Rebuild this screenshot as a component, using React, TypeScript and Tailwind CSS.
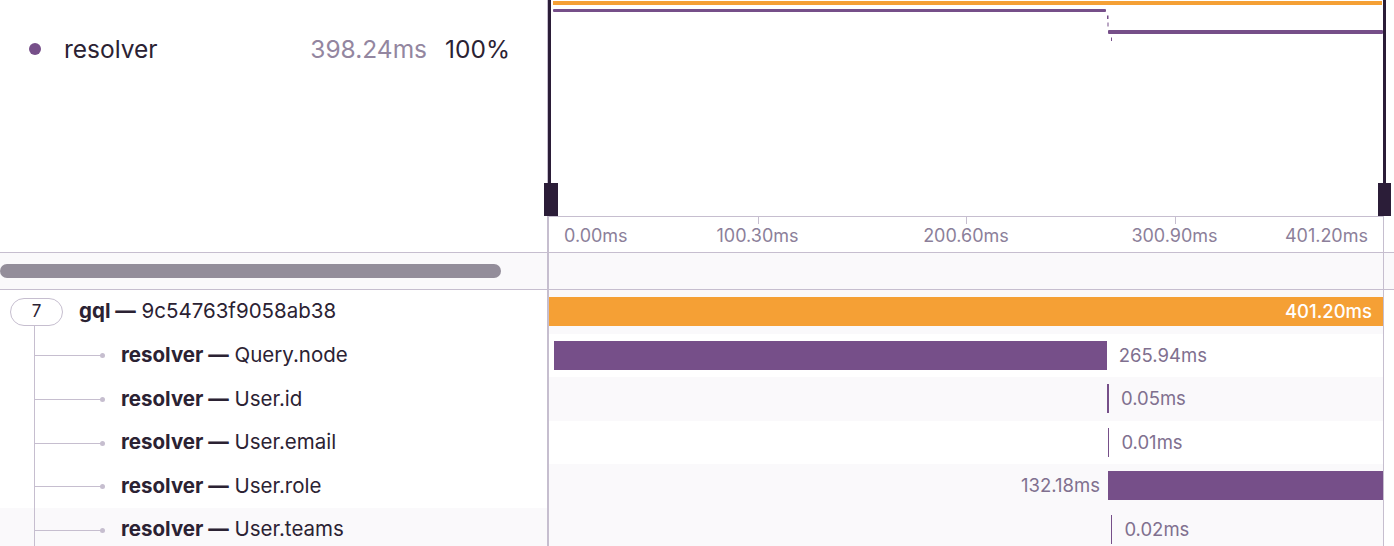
import React from "react";

type Span = {
  op: string;
  desc: string;
  start: number; // ms
  dur: number; // ms
  minW?: number;
  root?: boolean;
};

const TOTAL = 401.2;
const TRACK = 834; // px width of the timeline track
const PX = TRACK / TOTAL;

const spans: Span[] = [
  { op: "gql", desc: "9c54763f9058ab38", start: 0, dur: 401.2, root: true },
  { op: "resolver", desc: "Query.node", start: 2.41, dur: 265.94 },
  { op: "resolver", desc: "User.id", start: 268.4, dur: 0.05, minW: 2 },
  { op: "resolver", desc: "User.email", start: 269.1, dur: 0.01, minW: 1 },
  { op: "resolver", desc: "User.role", start: 268.9, dur: 132.18 },
  { op: "resolver", desc: "User.teams", start: 270.3, dur: 0.02, minW: 1.5 },
];

const fmt = (ms: number) => `${ms.toFixed(2)}ms`;

function Minimap() {
  return (
    <svg className="absolute left-0 top-0" width="845" height="216" viewBox="0 0 845 216">
      <rect x="4" y="1" width="829" height="4" fill="#f5a035" />
      <rect x="4" y="9" width="553" height="3" rx="1" fill="#764f89" />
      <rect x="558" y="15.5" width="1.5" height="3.5" fill="#764f89" />
      <rect x="558.5" y="22.5" width="1" height="4" fill="#764f89" />
      <rect x="559" y="30" width="275" height="4" rx="1" fill="#764f89" />
      <rect x="562" y="37.5" width="1" height="3.5" fill="#764f89" />
    </svg>
  );
}

// axis labels sit on the tick positions, first/last pinned to the edges
function Axis() {
  const ticks = [1, 2, 3];
  return (
    <div className="relative h-[36px] border-t border-r border-[#c6becf] text-[18px] text-[#8c7f9a]">
      {ticks.map((t) => (
        <React.Fragment key={t}>
          <div className="absolute top-0 h-[7px] w-px bg-[#c6becf]" style={{ left: (TRACK / 4) * t }} />
          <span
            className="absolute top-0 flex h-full -translate-x-1/2 items-center pt-[1px]"
            style={{ left: (TRACK / 4) * t }}
          >
            {fmt((TOTAL / 4) * t)}
          </span>
        </React.Fragment>
      ))}
      <div className="flex h-full items-center justify-between px-[15px] pt-[1px]">
        <span>0.00ms</span>
        <span>{fmt(TOTAL)}</span>
      </div>
    </div>
  );
}

function TimelineCell({ s }: { s: Span }) {
  const left = s.start * PX;
  const width = Math.max(s.dur * PX, s.minW ?? 1);
  const atEnd = left + width > TRACK - 60;
  if (s.root) {
    return (
      <div className="absolute left-0 right-0 top-[7px] flex h-[29px] items-center justify-end bg-[#f5a035] pr-[11px] text-[18.5px] font-medium text-white">
        {fmt(s.dur)}
      </div>
    );
  }
  return (
    <>
      <div className="absolute top-[7px] h-[29px] bg-[#764f89]" style={{ left, width }} />
      {atEnd ? (
        <span
          className="absolute top-0 flex h-full items-center text-[18.5px] text-[#80708f]"
          style={{ right: TRACK - left + 8 }}
        >
          {fmt(s.dur)}
        </span>
      ) : (
        <span
          className="absolute top-0 flex h-full items-center text-[18.5px] text-[#80708f]"
          style={{ left: left + width + 12 }}
        >
          {fmt(s.dur)}
        </span>
      )}
    </>
  );
}

export default function App() {
  return (
    <div className="relative h-[546px] w-[1394px] overflow-hidden bg-white font-['Inter','Noto_Sans',sans-serif] text-[#2b2233]">
      {/* header: legend + minimap + axis */}
      <div className="flex h-[253px] border-b border-[#c6becf]">
        <div className="w-[547px] shrink-0 pl-[29px] pr-[37px] pt-[35px]">
          <div className="flex h-[28px] items-center">
            <span className="h-[12px] w-[12px] rounded-full bg-[#764f89]" />
            <span className="ml-[23px] text-[24.5px]">resolver</span>
            <span className="ml-auto text-[24.5px] text-[#9386a0]">398.24ms</span>
            <span className="ml-[18px] text-[24.5px]">100%</span>
          </div>
        </div>
        <div className="relative flex w-[837px] flex-col border-l-2 border-[#c6becf]">
          <div className="relative h-[216px]">
            <Minimap />
            <div className="absolute left-[-1px] top-0 h-[183px] w-[3px] bg-[#2b1d38]" />
            <div className="absolute left-[-5px] top-[183px] h-[33px] w-[14px] bg-[#2b1d38]" />
            <div className="absolute left-[834px] top-0 h-[183px] w-[3px] bg-[#2b1d38]" />
            <div className="absolute left-[829px] top-[183px] h-[33px] w-[13px] bg-[#2b1d38]" />
          </div>
          <Axis />
        </div>
      </div>

      {/* scrollbar row */}
      <div className="flex h-[37px] border-b border-[#c6becf] bg-[#faf9fb]">
        <div className="flex w-[547px] shrink-0 items-center">
          <div className="h-[14px] w-[501px] rounded-full bg-[#938d9a]" />
        </div>
        <div className="w-[837px] border-l-2 border-r border-[#c6becf]" />
      </div>

      {/* rows */}
      <div className="relative">
        {spans.map((s, i) => {
          const hover = i === spans.length - 1;
          const stripe = i % 2 === 0 || hover;
          return (
            <div key={s.desc} className="flex h-[43.6px]">
              <div
                className={
                  "relative flex w-[547px] shrink-0 items-center " + (hover ? "bg-[#faf9fb]" : "bg-white")
                }
              >
                {s.root ? (
                  <>
                    <span className="ml-[10px] flex h-[28px] w-[53px] items-center justify-center rounded-full border border-[#c6becf] bg-white text-[17px]">
                      7
                    </span>
                    <span className="ml-[16px] text-[20.5px]">
                      <b className="font-bold">{s.op} —</b> {s.desc}
                    </span>
                  </>
                ) : (
                  <>
                    <div className="absolute left-[34px] top-1/2 h-px w-[68px] bg-[#c6becf]" />
                    <div className="absolute left-[100px] top-1/2 -mt-[2px] h-[5px] w-[5px] rounded-full bg-[#c6becf]" />
                    <span className="ml-[121px] text-[20.5px]">
                      <b className="font-bold">{s.op} —</b> {s.desc}
                    </span>
                  </>
                )}
              </div>
              <div
                className={
                  "relative w-[837px] border-l-2 border-r border-[#c6becf] " +
                  (stripe ? "bg-[#faf9fb]" : "bg-white")
                }
              >
                <TimelineCell s={s} />
              </div>
            </div>
          );
        })}
        <div className="absolute left-[34px] top-[36px] h-[300px] w-px bg-[#c6becf]" />
      </div>
    </div>
  );
}
